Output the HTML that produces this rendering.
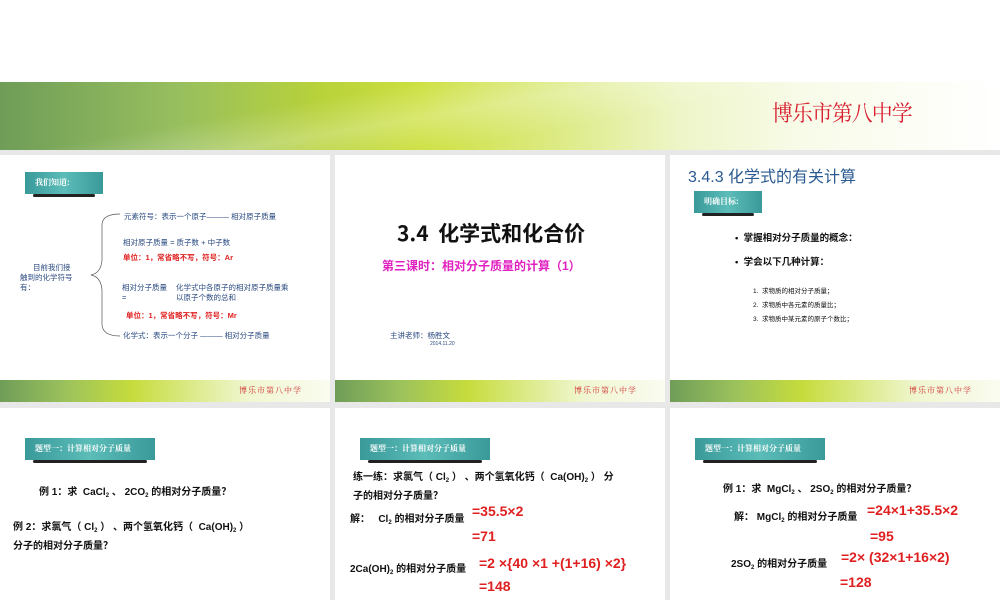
<!DOCTYPE html>
<html><head><meta charset="utf-8"><style>
*{margin:0;padding:0;box-sizing:border-box}
body{width:1000px;height:600px;overflow:hidden;background:#fff;position:relative;font-family:"Liberation Sans","Noto Sans CJK SC",sans-serif}
.abs{position:absolute;white-space:nowrap}
.banner{position:absolute;left:0;top:82px;width:1000px;height:68px;background:linear-gradient(90deg,#6f9d58 0%,#98bf5e 18%,#b8d23a 32%,#cde040 42%,#dcea80 55%,#eef5c8 68%,#f8fbe8 80%,#fff 100%)}
.banner:after{content:"";position:absolute;left:0;top:0;right:0;bottom:0;background:linear-gradient(170deg,rgba(255,255,255,0) 30%,rgba(255,255,255,.25) 45%,rgba(255,255,255,0) 60%)}
.gray{position:absolute;background:#e8e8e8}
.slide{position:absolute;background:#fff;overflow:hidden}
.foot{position:absolute;left:0;bottom:0;width:100%;height:22px;background:linear-gradient(90deg,#6f9d58 0%,#9cc25c 20%,#c6dc3c 40%,#dcea88 58%,#f0f6d0 75%,#fafcf0 100%)}
.foot span{position:absolute;right:28px;top:5px;font-size:8px;color:#d03030;font-family:"Noto Serif CJK SC",serif;letter-spacing:1px}
.tag{position:absolute;height:22px;background:linear-gradient(90deg,#3a9a9a,#5cbcb8 50%,#3a9a9a);color:#fff;font-size:8px;font-family:"Noto Serif CJK SC",serif;line-height:22px;padding-left:10px;font-weight:bold}
.tag:after{content:"";position:absolute;left:8px;right:8px;bottom:-3px;height:3px;background:#222;border-radius:2px}
.b{color:#2a4a80;font-size:7.5px}
.r{color:#e02020;font-weight:bold}
.k{color:#111;font-size:10px}
sub{font-size:6px;vertical-align:-2px}
</style></head><body>
<div class="banner"></div>
<div class="abs" style="left:772px;top:97px;font-size:22px;color:#d82030;font-family:'Noto Serif CJK SC',serif;letter-spacing:-1px;transform:scaleX(0.95);transform-origin:left">博乐市第八中学</div>
<div class="gray" style="left:0;top:150px;width:1000px;height:5px"></div>
<div class="gray" style="left:0;top:402px;width:1000px;height:6px"></div>
<div class="gray" style="left:330px;top:150px;width:5px;height:450px"></div>
<div class="gray" style="left:665px;top:150px;width:5px;height:450px"></div>

<!-- slide 1 -->
<div class="slide" style="left:0;top:155px;width:330px;height:247px">
 <div class="tag" style="left:25px;top:17px;width:78px">我们知道:</div>
 <svg class="abs" style="left:85px;top:55px" width="40" height="130"><path d="M35 4 Q18 4 17 14 L17 50 Q16 63 6 65 Q16 67 17 80 L17 115 Q18 126 35 126" fill="none" stroke="#555" stroke-width="0.7"/></svg>
 <div class="abs b" style="left:124px;top:56px">元素符号：表示一个原子——— 相对原子质量</div>
 <div class="abs b" style="left:123px;top:82px">相对原子质量 = 质子数 + 中子数</div>
 <div class="abs r" style="left:123px;top:97px;font-size:7.5px">单位：1，常省略不写，符号：Ar</div>
 <div class="abs b" style="left:33px;top:108px;line-height:10px">目前我们接</div>
 <div class="abs b" style="left:20px;top:118px;line-height:10px">触到的化学符号<br>有：</div>
 <div class="abs b" style="left:122px;top:128px;line-height:10px">相对分子质量<br>=</div>
 <div class="abs b" style="left:176px;top:128px;line-height:10px">化学式中各原子的相对原子质量乘<br>以原子个数的总和</div>
 <div class="abs r" style="left:126px;top:155px;font-size:7.5px">单位：1，常省略不写，符号：Mr</div>
 <div class="abs b" style="left:123px;top:175px">化学式：表示一个分子 ——— 相对分子质量</div>
 <div class="foot"><span>博乐市第八中学</span></div>
</div>

<!-- slide 2 -->
<div class="slide" style="left:335px;top:155px;width:330px;height:247px">
 <div class="abs" style="left:62px;top:63px;font-size:21px;color:#111;font-family:'Noto Sans CJK SC',sans-serif;font-weight:bold">3.4&nbsp; 化学式和化合价</div>
 <div class="abs" style="left:47px;top:102px;font-size:12px;color:#e020c0;font-weight:bold">第三课时：相对分子质量的计算（1）</div>
 <div class="abs b" style="left:55px;top:175px">主讲老师：杨胜文</div>
 <div class="abs b" style="left:95px;top:186px;font-size:5px">2014.11.20</div>
 <div class="foot"><span>博乐市第八中学</span></div>
</div>

<!-- slide 3 -->
<div class="slide" style="left:670px;top:155px;width:330px;height:247px">
 <div class="abs" style="left:18px;top:8px;font-size:16px;color:#2a5a90">3.4.3 化学式的有关计算</div>
 <div class="tag" style="left:24px;top:36px;width:68px">明确目标:</div>
 <div class="abs k" style="left:65px;top:75px;font-size:9.5px;font-weight:bold">•&nbsp; 掌握相对分子质量的概念：</div>
 <div class="abs k" style="left:65px;top:99px;font-size:9.5px;font-weight:bold">•&nbsp; 学会以下几种计算：</div>
 <div class="abs k" style="left:83px;top:130px;font-size:6.5px;line-height:14px">1.&nbsp; 求物质的相对分子质量；<br>2.&nbsp; 求物质中各元素的质量比；<br>3.&nbsp; 求物质中某元素的原子个数比；</div>
 <div class="foot"><span>博乐市第八中学</span></div>
</div>

<!-- slide 4 -->
<div class="slide" style="left:0;top:408px;width:330px;height:192px">
 <div class="tag" style="left:25px;top:30px;width:130px">题型一：计算相对分子质量</div>
 <div class="abs k" style="left:39px;top:75px;font-weight:bold">例 1：求&nbsp; CaCl<sub>2</sub> 、 2CO<sub>2</sub> 的相对分子质量？</div>
 <div class="abs k" style="left:13px;top:112px;line-height:15px;font-weight:bold">例 2：求氯气（ Cl<sub>2</sub> ） 、两个氢氧化钙（&nbsp; Ca(OH)<sub>2</sub> ）<br>分子的相对分子质量？</div>
</div>

<!-- slide 5 -->
<div class="slide" style="left:335px;top:408px;width:330px;height:192px">
 <div class="tag" style="left:25px;top:30px;width:130px">题型一：计算相对分子质量</div>
 <div class="abs k" style="left:18px;top:62px;line-height:15px;font-weight:bold">练一练：求氯气（ Cl<sub>2</sub> ） 、两个氢氧化钙（&nbsp; Ca(OH)<sub>2</sub> ） 分<br>子的相对分子质量？</div>
 <div class="abs k" style="left:15px;top:102px;font-weight:bold">解：&nbsp;&nbsp; Cl<sub>2</sub> 的相对分子质量</div>
 <div class="abs r" style="left:137px;top:95px;font-size:14px">=35.5×2</div>
 <div class="abs r" style="left:137px;top:120px;font-size:14px">=71</div>
 <div class="abs k" style="left:15px;top:152px;font-weight:bold">2Ca(OH)<sub>2</sub> 的相对分子质量</div>
 <div class="abs r" style="left:144px;top:147px;font-size:14px">=2 ×{40 ×1 +(1+16) ×2}</div>
 <div class="abs r" style="left:144px;top:170px;font-size:14px">=148</div>
</div>

<!-- slide 6 -->
<div class="slide" style="left:670px;top:408px;width:330px;height:192px">
 <div class="tag" style="left:25px;top:30px;width:130px">题型一：计算相对分子质量</div>
 <div class="abs k" style="left:53px;top:72px;font-weight:bold">例 1：求&nbsp; MgCl<sub>2</sub> 、 2SO<sub>2</sub> 的相对分子质量？</div>
 <div class="abs k" style="left:64px;top:100px;font-weight:bold">解：&nbsp;MgCl<sub>2</sub> 的相对分子质量</div>
 <div class="abs r" style="left:197px;top:94px;font-size:14px">=24×1+35.5×2</div>
 <div class="abs r" style="left:200px;top:120px;font-size:14px">=95</div>
 <div class="abs k" style="left:61px;top:147px;font-weight:bold">2SO<sub>2</sub> 的相对分子质量</div>
 <div class="abs r" style="left:171px;top:141px;font-size:14px">=2× (32×1+16×2)</div>
 <div class="abs r" style="left:170px;top:166px;font-size:14px">=128</div>
</div>
</body></html>
